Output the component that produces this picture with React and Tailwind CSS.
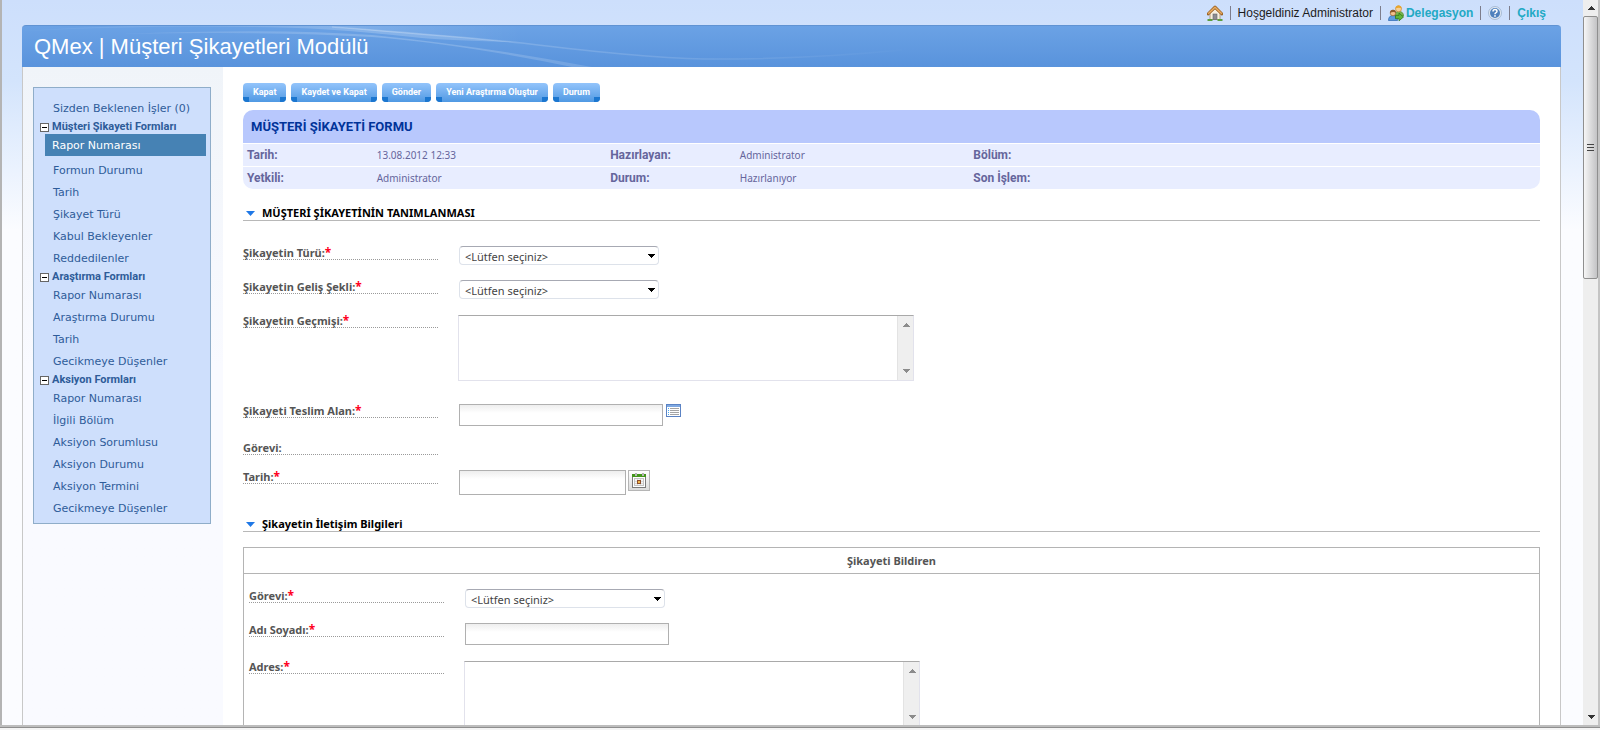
import React from 'react';

const menuGroups = [
  {
    title: 'Müşteri Şikayeti Formları',
    items: ['Rapor Numarası', 'Formun Durumu', 'Tarih', 'Şikayet Türü', 'Kabul Bekleyenler', 'Reddedilenler'],
  },
  {
    title: 'Araştırma Formları',
    items: ['Rapor Numarası', 'Araştırma Durumu', 'Tarih', 'Gecikmeye Düşenler'],
  },
  {
    title: 'Aksiyon Formları',
    items: [
      'Rapor Numarası',
      'İlgili Bölüm',
      'Aksiyon Sorumlusu',
      'Aksiyon Durumu',
      'Aksiyon Termini',
      'Gecikmeye Düşenler',
    ],
  },
];

const actions = ['Kapat', 'Kaydet ve Kapat', 'Gönder', 'Yeni Araştırma Oluştur', 'Durum'];

const HomeIcon = () => (
  <svg width="16" height="16" viewBox="0 0 16 16">
    <path d="M3 8 L8 3.5 L13 8 V14.5 H3 Z" fill="#f7efe0" stroke="#a98b62" strokeWidth="0.8" />
    <rect x="6" y="9" width="4" height="5.5" fill="#8d8d93" stroke="#66666c" strokeWidth="0.6" />
    <path d="M1 9 L8 2.2 L15 9" fill="none" stroke="#9c6426" strokeWidth="3" strokeLinejoin="round" strokeLinecap="round" />
    <path d="M1.2 8.8 L8 2.3 L14.8 8.8" fill="none" stroke="#e9ac62" strokeWidth="1.5" strokeLinejoin="round" />
    <path d="M0.5 15 H5.5 M10.5 15 H15.5" stroke="#5c9e3f" strokeWidth="1.8" />
  </svg>
);

const PeopleIcon = () => (
  <svg width="16" height="16" viewBox="0 0 16 16">
    <path d="M6.5 11 Q6.5 6.5 11 6.5 Q15.5 6.5 15.5 11 Z" fill="#7db54f" stroke="#4d8a2a" strokeWidth="0.7" />
    <circle cx="10.5" cy="3.8" r="3" fill="#f7cf95" stroke="#c98a2f" strokeWidth="0.7" />
    <path d="M7.5 3.5 Q8 0.5 10.5 0.5 Q13.3 0.5 13.5 3.5 Q11 1.8 7.5 3.5 Z" fill="#e9a62b" />
    <path d="M0.5 15.5 Q0.5 10.5 5 10.5 Q9.5 10.5 9.5 15.5 Z" fill="#5b9be0" stroke="#2a66b0" strokeWidth="0.7" />
    <circle cx="5" cy="8" r="2.8" fill="#f3c08b" stroke="#96622f" strokeWidth="0.7" />
    <path d="M2 8 Q2.2 4.8 5 4.8 Q7.8 4.8 8 8 Q5.5 6 2 8 Z" fill="#8e5a2a" />
    <path d="M7.5 10.3 H11 V8 L15.5 12 L11 15.8 V13.7 H7.5 Z" fill="#62b53c" stroke="#2f7a17" strokeWidth="0.8" />
  </svg>
);

const HelpIcon = () => (
  <svg width="14" height="14" viewBox="0 0 14 14">
    <circle cx="7" cy="7" r="6.5" fill="#dfe8f3" stroke="#9db2cd" strokeWidth="0.8" />
    <circle cx="7" cy="7" r="5" fill="#4f81bd" />
    <path d="M5 5.6 Q5 3.6 7 3.6 Q9 3.6 9 5.3 Q9 6.4 7.8 6.9 Q7 7.3 7 8.3" fill="none" stroke="#fff" strokeWidth="1.5" />
    <rect x="6.2" y="9.2" width="1.6" height="1.5" fill="#fff" />
  </svg>
);

const ListIcon = () => (
  <svg width="15" height="13" viewBox="0 0 15 13" shapeRendering="crispEdges">
    <rect x="0.5" y="0.5" width="14" height="12" fill="#fff" stroke="#5b83c4" />
    <rect x="1" y="1" width="13" height="2" fill="#7fa9e2" />
    <path d="M2 4.5 H3 M2 6.5 H3 M2 8.5 H3 M2 10.5 H3" stroke="#49a8f0" />
    <path d="M4 4.5 H13 M4 6.5 H13 M4 8.5 H13 M4 10.5 H13" stroke="#a4a4a4" />
  </svg>
);

const CalendarIcon = () => (
  <svg width="14" height="15" viewBox="0 0 14 15" shapeRendering="crispEdges">
    <rect x="0.5" y="2.5" width="13" height="12" fill="#fff" stroke="#7a7a7a" />
    <rect x="0" y="1" width="14" height="3" fill="#43961b" />
    <path d="M3.5 0 V3 M10.5 0 V3" stroke="#b5b5b5" strokeWidth="2" />
    <rect x="2.5" y="5.5" width="9" height="7" fill="#f4f4f4" stroke="#c4c4c4" />
    <path d="M5.5 6 V12 M8.5 6 V12 M3 8.5 H11 M3 10.5 H11" stroke="#dadada" />
    <rect x="5.5" y="7.5" width="3" height="3" fill="#f2b84b" stroke="#8e4f2c" />
  </svg>
);

const Arrow = ({ up, className }) => (
  <svg width="8" height="4" viewBox="0 0 8 4" shapeRendering="crispEdges" className={className}>
    <path d={up ? 'M4 0 L8 4 H0 Z' : 'M0 0 H8 L4 4 Z'} fill="currentColor" />
  </svg>
);

const Separator = () => <span className="h-3.5 w-px bg-[#7d7d8c]" />;

const TopBar = () => (
  <div className="flex h-[25px] items-center justify-end gap-[7px] pr-[15px] text-xs text-[#1c1c1c]">
    <a href="#home" aria-label="Ana sayfa"><HomeIcon /></a>
    <Separator />
    <span>Hoşgeldiniz Administrator</span>
    <Separator />
    <a href="#delegasyon" className="flex items-center gap-0.5 font-bold text-[#22a9c4]">
      <PeopleIcon />
      Delegasyon
    </a>
    <Separator />
    <a href="#yardim" aria-label="Yardım"><HelpIcon /></a>
    <Separator />
    <a href="#cikis" className="font-bold text-[#22a9c4]">Çıkış</a>
  </div>
);

const Header = () => (
  <header className="relative flex h-[42px] items-center overflow-hidden rounded-t border-t border-[#6093d3] bg-linear-to-b from-[#6ba2e5] to-[#5993dc] pl-3">
    <svg className="absolute top-0 left-0" width="900" height="42" viewBox="0 0 900 42" fill="none">
      <defs>
        <linearGradient id="swoosh" gradientUnits="userSpaceOnUse" x1="0" x2="900" y1="0" y2="0">
          <stop offset="0" stopColor="#fff" stopOpacity="0.04" />
          <stop offset="0.4" stopColor="#fff" stopOpacity="0.2" />
          <stop offset="0.75" stopColor="#fff" stopOpacity="0.12" />
          <stop offset="1" stopColor="#fff" stopOpacity="0" />
        </linearGradient>
        <linearGradient id="glow" gradientUnits="userSpaceOnUse" x1="300" x2="500" y1="0" y2="0">
          <stop offset="0" stopColor="#fff" stopOpacity="0.16" />
          <stop offset="1" stopColor="#fff" stopOpacity="0" />
        </linearGradient>
      </defs>
      <path d="M0 5 Q130 -4 300 0 Q410 8 490 16 Q420 14 400 12 Q300 1 230 1 Q130 -1 0 5 Z" fill="url(#swoosh)" />
      <path d="M300 0 Q400 10 500 17 V0 Z" fill="url(#glow)" />
      <path d="M100 8 Q250 2 350 9 Q460 20 575 42 H555 Q440 18 350 11 Q250 5 100 8 Z" fill="url(#swoosh)" />
      <path d="M310 1 Q420 9 500 17 Q630 33 690 33 Q790 33 880 24" stroke="url(#swoosh)" strokeWidth="1.5" />
    </svg>
    <h1 className="relative text-[22px] leading-7 text-white">QMex | Müşteri Şikayetleri Modülü</h1>
  </header>
);

const Sidebar = () => (
  <aside className="w-[200px] shrink-0 bg-linear-to-b from-[#f0f4f9] to-[#f9faff] to-[300px] px-2.5 pt-5">
    <nav className="mr-0.5 border border-[#8fadc9] bg-[#cedffc] pt-[9px] pr-1 pb-1 pl-1.5 font-['DejaVu_Sans',Verdana,sans-serif] text-[11px] text-[#2e5c99]">
      <a href="#bekleyen" className="block pt-0.5 pl-[13px] leading-5">Sizden Beklenen İşler (0)</a>
      {menuGroups.map((group, groupIndex) => (
        <div key={group.title}>
          <button type="button" className="flex h-[15px] items-center gap-[3px] pt-0.5 font-[Roboto,Tahoma,sans-serif] font-bold whitespace-nowrap">
            <svg width="9" height="9" viewBox="0 0 9 9" shapeRendering="crispEdges">
              <rect x="0.5" y="0.5" width="8" height="8" fill="#fff" stroke="#666" />
              <path d="M2 4.5 H7" stroke="#000" />
            </svg>
            {group.title}
          </button>
          {group.items.map((item, index) => (
            <a
              key={item}
              href="#liste"
              className={
                groupIndex === 0 && index === 0
                  ? 'mb-[3px] ml-[5px] block bg-[#4682b4] pt-0.5 pl-[7px] leading-5 text-white'
                  : 'block pt-0.5 pl-[13px] leading-5'
              }
            >
              {item}
            </a>
          ))}
        </div>
      ))}
    </nav>
  </aside>
);

const ActionButton = ({ children }) => (
  <button
    type="button"
    className="relative h-[19px] overflow-hidden rounded bg-linear-to-b from-[#93c4fb] to-[#4f99e3] px-2.5 font-[Roboto,Tahoma,sans-serif] text-[9px] font-bold text-white"
  >
    <span className="absolute bottom-0 left-0 h-[5px] w-1.5 bg-[#1b76cf]" />
    <span className="absolute right-0 bottom-0 h-[5px] w-1.5 bg-[#1b76cf]" />
    {children}
  </button>
);

const InfoTable = () => (
  <table className="mt-2 w-full table-fixed border-separate border-spacing-0 overflow-hidden rounded-[10px] text-left text-[11px] text-[#65659c]">
    <colgroup>
      <col className="w-[10%]" />
      <col className="w-[18%]" />
      <col className="w-[10%]" />
      <col className="w-[18%]" />
      <col className="w-[10%]" />
      <col />
    </colgroup>
    <thead>
      <tr>
        <th colSpan={6} className="h-[33px] bg-[#b8c8fd] px-2 font-[Roboto,Tahoma,sans-serif] text-[13px] font-bold text-[#003399]">
          MÜŞTERİ ŞİKAYETİ FORMU
        </th>
      </tr>
    </thead>
    <tbody>
      {[
        ['Tarih:', '13.08.2012 12:33', 'Hazırlayan:', 'Administrator', 'Bölüm:', ''],
        ['Yetkili:', 'Administrator', 'Durum:', 'Hazırlanıyor', 'Son İşlem:', ''],
      ].map((row) => (
        <tr key={row[0]}>
          {row.map((cell, i) =>
            i % 2 === 0 ? (
              <th key={i} className="h-[23px] border-t border-white bg-[#e8edff] px-1 font-[Roboto,sans-serif] text-xs font-bold">
                {cell}
              </th>
            ) : (
              <td key={i} className="h-[23px] border-t border-white bg-[#e8edff] px-1 text-[10px]">
                {cell}
              </td>
            )
          )}
        </tr>
      ))}
    </tbody>
  </table>
);

const SectionTitle = ({ children }) => (
  <h2 className="flex h-4 items-center gap-[7px] border-b border-[#b8b8b8] pt-0.5 pl-[3px] text-[11px] font-bold text-black">
    <svg width="9" height="5" viewBox="0 0 9 5">
      <path d="M0 0 H9 L4.5 5 Z" fill="#1f78e6" />
    </svg>
    {children}
  </h2>
);

const Row = ({ id, label, required, height, children }) => (
  <div className={`flex items-start ${height}`}>
    <label htmlFor={id} className="mr-5 block h-[15px] w-[195px] border-b border-dotted border-[#9a9a9a] text-[11px] leading-4 font-bold text-[#555]">
      {label}
      {required && <span className="text-xs leading-none text-[#ff0022]">*</span>}
    </label>
    {children}
  </div>
);

const SelectBox = ({ id }) => (
  <div className="relative mt-px ml-px h-[19px] w-[200px]">
    <select id={id} className="block h-full w-full appearance-none rounded-sm border border-[#dde2ea] border-t-[#a7a9b3] bg-white pt-0.5 pl-[5px] text-[11px] leading-4 text-[#444]">
      <option>&lt;Lütfen seçiniz&gt;</option>
    </select>
    <Arrow className="pointer-events-none absolute top-2 right-1 text-black" />
  </div>
);

const TextInput = ({ id, size }) => (
  <input
    id={id}
    type="text"
    className={`mt-px ml-px border border-[#b0b0b0] bg-linear-to-b from-[#eeeeee] to-white to-[8px] px-1 text-[11px] ${size}`}
  />
);

const TextBox = ({ id }) => (
  <div className="mt-0.5 flex h-[66px] w-[456px] border border-[#e2e2ec] border-t-[#a9a9a9] bg-white">
    <textarea id={id} className="min-w-0 flex-1 resize-none overflow-hidden p-1 text-[11px] outline-none" />
    <div className="flex w-4 flex-col items-center justify-between border-l border-[#e3e3e3] bg-[#efefef] py-[7px] text-[#8c8c8c]">
      <Arrow up />
      <Arrow />
    </div>
  </div>
);

const ScrollBar = () => (
  <div className="flex w-[15px] shrink-0 flex-col items-center bg-[#eeeeee] text-[#333]">
    <div className="flex h-4 items-center"><Arrow up /></div>
    <div className="flex h-[263px] w-full flex-col items-center justify-center gap-0.5 rounded-xs border border-[#8f8f8f] bg-linear-to-r from-[#f6f6f6] to-[#c3c3c5]">
      <span className="h-px w-[7px] bg-[#444]" />
      <span className="h-px w-[7px] bg-[#444]" />
      <span className="h-px w-[7px] bg-[#444]" />
    </div>
    <div className="mt-auto flex h-4 items-center"><Arrow /></div>
  </div>
);

const ComplaintForm = () => (
  <form className="min-w-0 flex-1 bg-white px-5 pt-4 font-['Noto_Sans',Tahoma,sans-serif]">
    <div className="flex gap-[5px]">
      {actions.map((action) => (
        <ActionButton key={action}>{action}</ActionButton>
      ))}
    </div>
    <InfoTable />

    <section className="mt-4">
      <SectionTitle>MÜŞTERİ ŞİKAYETİNİN TANIMLANMASI</SectionTitle>
      <div className="pt-6">
        <Row id="tur" label="Şikayetin Türü:" required height="h-[34px]">
          <SelectBox id="tur" />
        </Row>
        <Row id="gelis" label="Şikayetin Geliş Şekli:" required height="h-[34px]">
          <SelectBox id="gelis" />
        </Row>
        <Row id="gecmis" label="Şikayetin Geçmişi:" required height="h-[90px]">
          <TextBox id="gecmis" />
        </Row>
        <Row id="teslim" label="Şikayeti Teslim Alan:" required height="h-[37px]">
          <TextInput id="teslim" size="h-[22px] w-[204px]" />
          <button type="button" aria-label="Kişi seç" className="mt-px ml-[3px]"><ListIcon /></button>
        </Row>
        <Row label="Görevi:" height="h-[29px]" />
        <Row id="tarih" label="Tarih:" required height="h-[47px]">
          <TextInput id="tarih" size="h-[25px] w-[167px]" />
          <button
            type="button"
            aria-label="Tarih seç"
            className="mt-px ml-0.5 flex h-[21px] w-[22px] items-center justify-center border border-[#b5b5b5] bg-linear-to-b from-white to-[#dcdcdc]"
          >
            <CalendarIcon />
          </button>
        </Row>
      </div>
    </section>

    <section>
      <SectionTitle>Şikayetin İletişim Bilgileri</SectionTitle>
      <div className="mt-[15px] border border-[#b4b4b4]">
        <h3 className="border-b border-[#b4b4b4] text-center text-[11px] leading-[25px] font-bold text-[#555]">Şikayeti Bildiren</h3>
        <div className="pt-3.5 pl-[5px]">
          <Row id="gorev" label="Görevi:" required height="h-[34px]">
            <SelectBox id="gorev" />
          </Row>
          <Row id="ad" label="Adı Soyadı:" required height="h-[37px]">
            <TextInput id="ad" size="h-[22px] w-[204px]" />
          </Row>
          <Row id="adres" label="Adres:" required height="h-[90px]">
            <TextBox id="adres" />
          </Row>
        </div>
      </div>
    </section>
  </form>
);

const App = () => {
  return (
    <div className="flex h-screen flex-col overflow-hidden bg-[#f0f0f0] font-['Liberation_Sans',Arial,sans-serif]">
      <div className="flex min-h-0 flex-1 border-x-2 border-[#b4b4b4] border-r-[#c4c4c4]">
        <div className="min-w-0 flex-1 overflow-hidden bg-[#fbfcff] bg-linear-to-b from-[#cddffc] via-[#d3e4fc] via-[80px] to-[#fbfcff] to-[230px] pr-[22px] pl-5">
          <TopBar />
          <Header />
          <div className="flex border-x border-[#c8c8c8]">
            <Sidebar />
            <ComplaintForm />
          </div>
        </div>
        <ScrollBar />
      </div>
      <div className="h-[5px] shrink-0 border-t-2 border-b-2 border-t-[#bdbdbd] border-b-[#f4f4f4] bg-[#8f8f8f]" />
    </div>
  );
};

export default App;
